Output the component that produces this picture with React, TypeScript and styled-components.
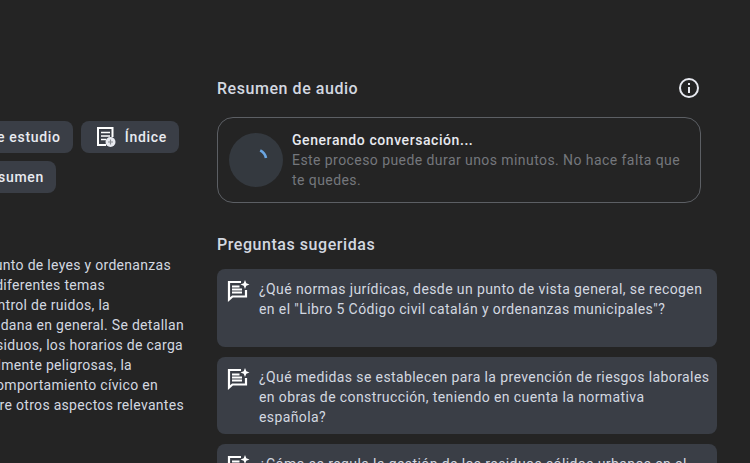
import React from "react";
import styled, { createGlobalStyle } from "styled-components";

const GlobalStyle = createGlobalStyle`
  html, body {
    margin: 0;
    padding: 0;
    background: #242424;
  }
  body {
    font-family: Roboto, "Noto Sans", sans-serif;
    color: #e3e3e3;
  }
`;

const Page = styled.div`
  display: flex;
  width: 750px;
  height: 463px;
  overflow: hidden;
  background: #242424;
`;

const LeftColumn = styled.div`
  flex: none;
  width: 184px;
  padding-top: 121px;
  margin-right: 33px;
`;

const ChipRow = styled.div<{ $end: number }>`
  display: flex;
  justify-content: flex-end;
  gap: 8px;
  width: ${(p) => p.$end}px;
  margin-bottom: 8px;
`;

const Chip = styled.div`
  flex: none;
  display: flex;
  align-items: center;
  gap: 8px;
  height: 32px;
  padding: 0 12px 0 14px;
  border-radius: 8px;
  background: #3a3e46;
  color: #e8eaf0;
  font-size: 14px;
  font-weight: 500;
  letter-spacing: 0.7px;
  white-space: nowrap;
`;

const Summary = styled.div`
  margin-top: 62px;
`;

const SummaryLine = styled.div<{ $end: number }>`
  display: flex;
  justify-content: flex-end;
  width: ${(p) => p.$end}px;
  height: 20px;
  font-size: 14px;
  line-height: 20px;
  letter-spacing: 0.3px;
  color: #d3d8e0;
  white-space: nowrap;
`;

const RightColumn = styled.div`
  flex: none;
  width: 500px;
  padding-top: 76px;
`;

const HeaderRow = styled.div`
  display: flex;
  justify-content: space-between;
  align-items: center;
  width: 484px;
  height: 24px;
  margin-bottom: 17px;
`;

const Heading = styled.h2`
  margin: 0;
  font-size: 16px;
  font-weight: 500;
  line-height: 24px;
  letter-spacing: 0.55px;
  color: #d3d8e0;
`;

const AudioHeading = styled(Heading)`
  padding-top: 2px;
`;

const InfoButton = styled.div`
  display: flex;
  width: 24px;
  height: 24px;
`;

const AudioBox = styled.div`
  box-sizing: border-box;
  display: flex;
  align-items: center;
  gap: 8px;
  width: 484px;
  height: 86px;
  padding: 0 12px 0 11px;
  border: 1px solid #5c5f64;
  border-radius: 16px;
`;

const Spinner = styled.div`
  flex: none;
  width: 54px;
  height: 54px;
  margin-right: 1px;
`;

const AudioText = styled.div`
  font-size: 14px;
  line-height: 20px;
  letter-spacing: 0.43px;
`;

const AudioTitle = styled.div`
  font-weight: 500;
  letter-spacing: 0.57px;
  color: #e8eaf0;
`;

const AudioHint = styled.div`
  color: #74777c;
`;

const SuggestedHeading = styled(Heading)`
  margin-top: 30px;
  margin-bottom: 12px;
`;

const QuestionCard = styled.div`
  box-sizing: border-box;
  display: flex;
  gap: 9px;
  min-height: 77.5px;
  margin-bottom: 10px;
  padding: 10px 5px 7px 10px;
  border-radius: 8px;
  background: #3a3e46;
`;

const QuestionIconSlot = styled.div`
  flex: none;
  width: 23px;
  height: 24px;
`;

const QuestionText = styled.div`
  font-size: 14px;
  line-height: 20px;
  letter-spacing: 0.4px;
  color: #d3d8e0;
`;

const IndexIcon = () => (
  <svg width="22" height="22" viewBox="0 0 22 22" fill="none">
    <path d="M17.5 11V2H3v17h8" stroke="#fff" strokeWidth="2" />
    <path d="M6 6.5h9M6 10h9M6 13.5h5" stroke="#fff" strokeWidth="1.7" />
    <circle cx="15.5" cy="16" r="5" fill="#e8eaf0" />
    <path d="M15.5 13.5v5M13 16h5" stroke="#8a8d94" strokeWidth="1.2" />
  </svg>
);

const InfoIcon = () => (
  <svg width="24" height="24" viewBox="0 0 24 24" fill="none">
    <circle cx="12" cy="12" r="9" stroke="#e8eaf0" strokeWidth="2" />
    <rect x="11" y="11" width="2" height="6" fill="#e8eaf0" />
    <rect x="11" y="7" width="2" height="2" fill="#e8eaf0" />
  </svg>
);

const SpinnerIcon = () => (
  <svg width="54" height="54" viewBox="0 0 54 54" fill="none">
    <circle cx="27" cy="27" r="27" fill="#34393f" />
    <path d="M31.2 17.4A10.8 10.8 0 0 1 37 25" stroke="#6ba6e2" strokeWidth="2.6" />
  </svg>
);

const ChatSparkIcon = () => (
  <svg width="23" height="24" viewBox="0 0 23 24" fill="none">
    <path d="M14 3H2v17.5L5.5 17.5H19V11" stroke="#fff" strokeWidth="2.2" />
    <path d="M5 7.5h7.5M5 10.5h10M5 13.5h10" stroke="#fff" strokeWidth="1.8" />
    <path
      d="M18 1l1.3 3.2L22.5 5.5l-3.2 1.3L18 10l-1.3-3.2L13.5 5.5l3.2-1.3z"
      fill="#fff"
    />
  </svg>
);

const summaryLines = [
  { end: 171, text: "Este documento es un conjunto de leyes y ordenanzas" },
  { end: 105, text: "sobre diferentes temas" },
  { end: 110, text: "como el control de ruidos, la" },
  { end: 184, text: "la convivencia ciudadana en general. Se detallan" },
  { end: 183, text: "la gestión de residuos, los horarios de carga" },
  { end: 132, text: "las actividades especialmente peligrosas, la" },
  { end: 158, text: "normas sobre el comportamiento cívico en" },
  { end: 184, text: "público, entre otros aspectos relevantes" },
];

const questions = [
  '¿Qué normas jurídicas, desde un punto de vista general, se recogen en el "Libro 5 Código civil catalán y ordenanzas municipales"?',
  "¿Qué medidas se establecen para la prevención de riesgos laborales en obras de construcción, teniendo en cuenta la normativa española?",
  "¿Cómo se regula la gestión de los residuos sólidos urbanos en el ámbito municipal?",
];

export default function App() {
  return (
    <Page>
      <GlobalStyle />
      <LeftColumn>
        <ChipRow $end={179}>
          <Chip>Guía de estudio</Chip>
          <Chip>
            <IndexIcon />
            Índice
          </Chip>
        </ChipRow>
        <ChipRow $end={56}>
          <Chip>Documento de resumen</Chip>
        </ChipRow>
        <Summary>
          {summaryLines.map((line) => (
            <SummaryLine key={line.text} $end={line.end}>
              {line.text}
            </SummaryLine>
          ))}
        </Summary>
      </LeftColumn>
      <RightColumn>
        <HeaderRow>
          <AudioHeading>Resumen de audio</AudioHeading>
          <InfoButton>
            <InfoIcon />
          </InfoButton>
        </HeaderRow>
        <AudioBox>
          <Spinner>
            <SpinnerIcon />
          </Spinner>
          <AudioText>
            <AudioTitle>Generando conversación...</AudioTitle>
            <AudioHint>
              Este proceso puede durar unos minutos. No hace falta que te quedes.
            </AudioHint>
          </AudioText>
        </AudioBox>
        <SuggestedHeading>Preguntas sugeridas</SuggestedHeading>
        {questions.map((q) => (
          <QuestionCard key={q}>
            <QuestionIconSlot>
              <ChatSparkIcon />
            </QuestionIconSlot>
            <QuestionText>{q}</QuestionText>
          </QuestionCard>
        ))}
      </RightColumn>
    </Page>
  );
}
